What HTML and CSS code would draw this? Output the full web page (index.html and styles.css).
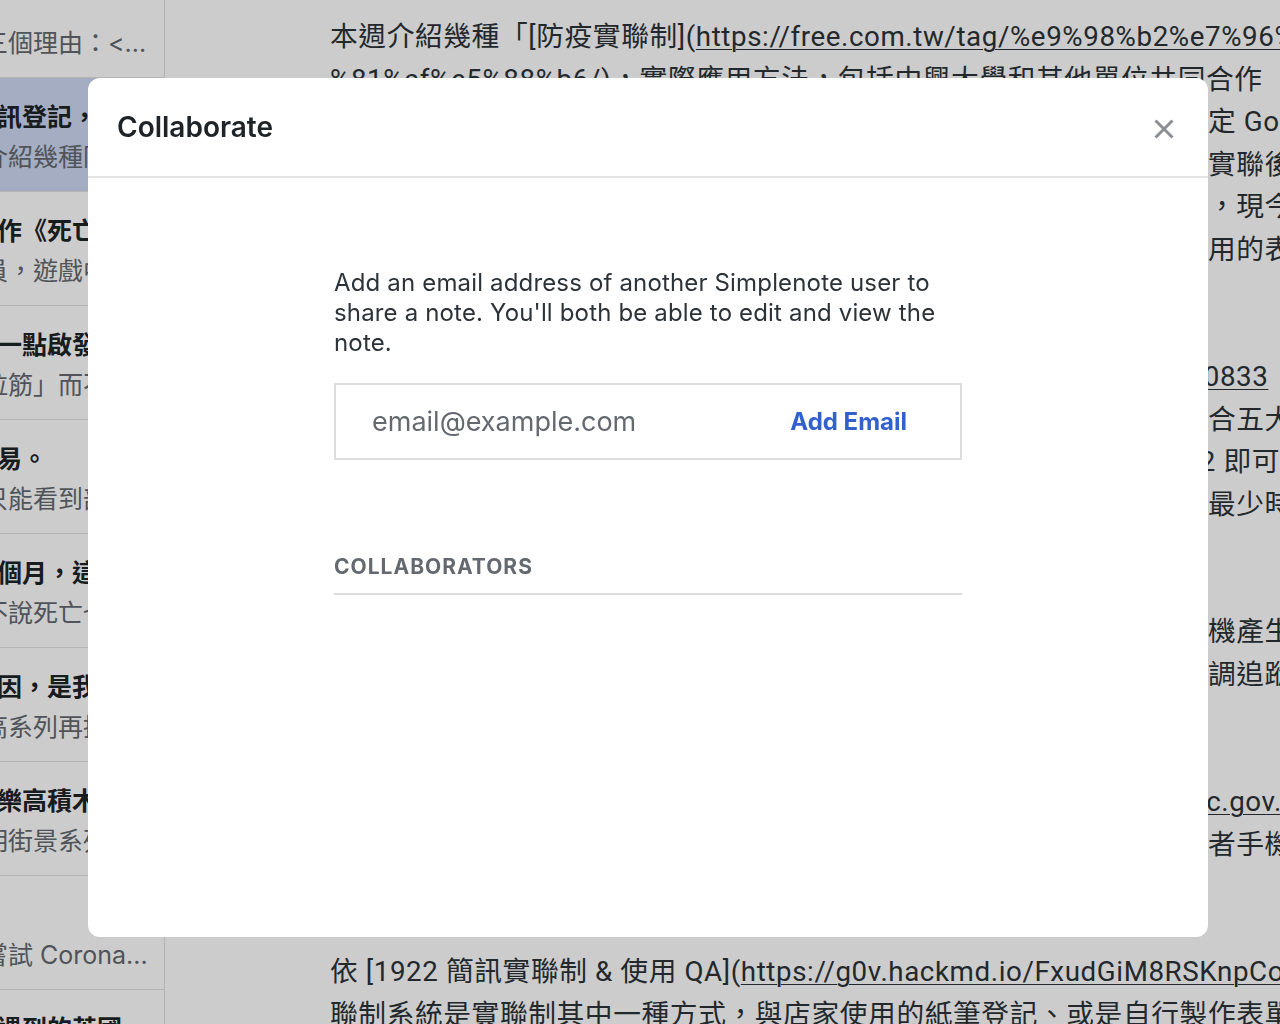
FILE: index.html
```html
<!DOCTYPE html>
<html lang="zh-Hant">
<head>
<meta charset="utf-8">
<title>Simplenote</title>
<link rel="stylesheet" href="styles.css">
</head>
<body>
<div class="app">
  <aside class="sidebar">
    <ul class="note-list">
      <li class="note"><div class="note-title">&nbsp;</div><div class="note-excerpt">三個理由：&lt;...</div></li>
      <li class="note is-selected"><div class="note-title">訊登記，用手機掃描</div><div class="note-excerpt">介紹幾種防疫實聯制</div></li>
      <li class="note"><div class="note-title">作《死亡擱淺》</div><div class="note-excerpt">員，遊戲中的角色</div></li>
      <li class="note"><div class="note-title">一點啟發</div><div class="note-excerpt">拉筋」而不是運動</div></li>
      <li class="note"><div class="note-title">易。</div><div class="note-excerpt">只能看到部分內容</div></li>
      <li class="note"><div class="note-title">個月，這是</div><div class="note-excerpt">不說死亡也能談</div></li>
      <li class="note"><div class="note-title">因，是我最</div><div class="note-excerpt">高系列再推出</div></li>
      <li class="note"><div class="note-title">樂高積木</div><div class="note-excerpt">明街景系列</div></li>
      <li class="note"><div class="note-title">&nbsp;</div><div class="note-excerpt">嘗試 Corona...</div></li>
      <li class="note"><div class="note-title">遇到的英國</div><div class="note-excerpt">旅行的紀錄</div></li>
    </ul>
  </aside>
  <main class="editor">
    <div class="line">本週介紹幾種「[防疫實聯制](<span class="link">https://free.com.tw/tag/%e9%98%b2%e7%96%ab%e5%af%a6%e8</span></div>
    <div class="line"><span class="link">%81%af%e5%88%b6/</span>)，實際應用方法，包括中興大學和其他單位共同合作</div>
    <div class="line">說明店家如何在短時間內建立自己的實聯制系統並透過雲端服務快速設定 Google 表單</div>
    <div class="line">除了官方推出的簡訊實聯制，各縣市政府和學校都陸續開發系統並導入實聯後，民眾</div>
    <div class="line">這些方式都能協助疫情調查人員在發現確診個案快速找到接觸者的足跡，現今大多數</div>
    <div class="line">本文整理幾種常用實聯制方式與優缺點，讓讀者了解哪一種適合自己使用的表單工具</div>
    <div class="line">&nbsp;</div>
    <div class="line">## 簡訊實聯制</div>
    <div class="line">詳細說明可參考中興大學公告（<span class="link">https://nchu.tw/a/news/show/p20200833</span></div>
    <div class="line">簡訊實聯制由中央流行疫情指揮中心推出，民眾只需掃描店家條碼並結合五大電信業者</div>
    <div class="line">手機自動開啟簡訊程式帶入場所代碼，只要確認內容無誤後傳送至1922 即可完成登記</div>
    <div class="line">所有資料都由電信業者保存二十八天，民眾不需填寫個人資料，可以用最少時間完成</div>
    <div class="line">&nbsp;</div>
    <div class="line">## 中興大學實聯制</div>
    <div class="line">中興大學開發實聯制系統會為每個場所建立專屬條碼，民眾掃描後以手機產生一組代碼</div>
    <div class="line">資料加密後儲存於學校伺服器，若發生確診案例可提供給衛生單位作疫調追蹤使用</div>
    <div class="line">&nbsp;</div>
    <div class="line">## 注意事項</div>
    <div class="line">關於簡訊實聯制的詳細資訊請參考疾病管制署的網站（<span class="link">https://www.cdc.gov.tw/</span>）</div>
    <div class="line">實聯制資料僅供防疫使用，各單位不得挪作他用，並應確保民眾及使用者手機資料安全</div>
    <div class="line">&nbsp;</div>
    <div class="line">&nbsp;</div>
    <div class="line">依 [1922 簡訊實聯制 &amp; 使用 QA](<span class="link">https://g0v.hackmd.io/FxudGiM8RSKnpCoaCxVfwQ</span>)</div>
    <div class="line">聯制系統是實聯制其中一種方式，與店家使用的紙筆登記、或是自行製作表單不同</div>
  </main>
</div>

<div class="overlay">
  <div class="modal" role="dialog" aria-labelledby="collab-title">
    <header class="modal-header">
      <h1 class="modal-title" id="collab-title">Collaborate</h1>
      <button class="close-btn" type="button" aria-label="Close">
        <svg viewBox="0 0 24 24" width="24" height="24" aria-hidden="true">
          <path d="M3.5 3.5 L20.5 20.5 M20.5 3.5 L3.5 20.5" stroke="#8c8f94" stroke-width="3" fill="none"/>
        </svg>
      </button>
    </header>
    <div class="modal-body">
      <div class="modal-content">
        <p class="intro">Add an email address of another Simplenote user to share a note. You'll both be able to edit and view the note.</p>
        <form class="add-form">
          <input class="email-input" type="email" placeholder="email@example.com">
          <button class="add-btn" type="button">Add Email</button>
        </form>
        <h2 class="section-title">Collaborators</h2>
      </div>
    </div>
  </div>
</div>
</body>
</html>
```

FILE: styles.css
```css
html, body {
  margin: 0;
  padding: 0;
}

body {
  font-family: Inter, "Noto Sans CJK TC", sans-serif;
  background: #ffffff;
  color: #2c3338;
  overflow: hidden;
}

.app {
  display: flex;
  height: 100vh;
  overflow: hidden;
}

/* ---------- note list ---------- */
.sidebar {
  flex: none;
  width: 164px;
  border-right: 1px solid #e2e2e4;
  overflow: hidden;
}

.note-list {
  list-style: none;
  margin: -36px 0 0;
  padding: 0;
}

.note {
  box-sizing: border-box;
  height: 114px;
  padding: 19px 16px 0 0;
  border-bottom: 1px solid #e2e2e4;
}

.note.is-selected {
  background: #ced9f2;
}

.note-title,
.note-excerpt {
  font-size: 25px;
  line-height: 40px;
  white-space: nowrap;
  overflow: hidden;
}

.note-title {
  margin-left: -3px;
  font-weight: 700;
  color: #1d2327;
}

.note-excerpt {
  margin-left: -17px;
  color: #646970;
}

/* ---------- editor ---------- */
.editor {
  flex: 1;
  min-width: 0;
  overflow: hidden;
  padding: 16px 0 0 165px;
  font-family: Roboto, "Noto Sans CJK TC", sans-serif;
  font-size: 27.73px;
  letter-spacing: 0.6px;
  color: #2c3338;
}

.line {
  height: 42.5px;
  line-height: 42.5px;
  white-space: nowrap;
}

.link {
  text-decoration: underline;
  text-decoration-thickness: 1px;
  text-underline-offset: 3px;
}

/* ---------- modal ---------- */
.overlay {
  position: fixed;
  inset: 0;
  box-sizing: border-box;
  padding: 78px 72px 87px 88px;
  background: rgba(0, 0, 0, 0.2);
  display: flex;
}

.modal {
  flex: 1;
  display: flex;
  flex-direction: column;
  background: #ffffff;
  border-radius: 12px;
  overflow: hidden;
}

.modal-header {
  flex: none;
  box-sizing: border-box;
  height: 100px;
  display: flex;
  align-items: center;
  justify-content: space-between;
  padding: 0 32px 0 29px;
  border-bottom: 2px solid #e4e4e6;
}

.modal-title {
  margin: 0;
  font-size: 28px;
  font-weight: 600;
  color: #1d2327;
}

.close-btn {
  display: flex;
  align-items: center;
  justify-content: center;
  width: 24px;
  height: 24px;
  margin-top: 4px;
  padding: 0;
  border: 0;
  background: none;
}

.modal-body {
  flex: 1;
  display: flex;
  justify-content: center;
  padding-top: 90px;
}

.modal-content {
  width: 628px;
}

.intro {
  margin: 0;
  font-size: 24px;
  line-height: 30px;
  letter-spacing: 0.16px;
  color: #2c3338;
}

.add-form {
  margin: 25px 0 0;
  box-sizing: border-box;
  height: 77px;
  display: flex;
  align-items: center;
  border: 2px solid #dcdcde;
}

.email-input {
  flex: 1;
  min-width: 0;
  height: 100%;
  padding: 0 0 0 36px;
  border: 0;
  outline: none;
  background: transparent;
  font-family: Inter, sans-serif;
  font-size: 27px;
  color: #2c3338;
}

.email-input::placeholder {
  color: #646970;
}

.add-btn {
  flex: none;
  padding: 0 53px 0 24px;
  border: 0;
  background: none;
  font-family: Inter, sans-serif;
  font-size: 24px;
  font-weight: 700;
  color: #3361cc;
}

.section-title {
  margin: 94px 0 0;
  padding-bottom: 13px;
  border-bottom: 2px solid #dcdcde;
  font-size: 21px;
  line-height: 26px;
  font-weight: 700;
  letter-spacing: 1px;
  text-transform: uppercase;
  color: #646970;
}
```
